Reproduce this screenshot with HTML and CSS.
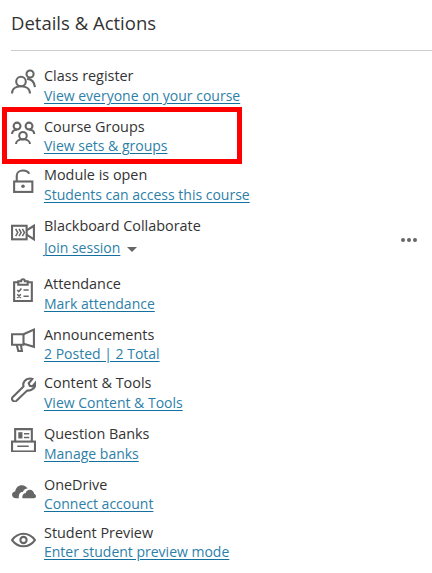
FILE: index.html
```html
<!DOCTYPE html>
<html lang="en">
<head>
  <meta charset="UTF-8" />
  <meta name="viewport" content="width=device-width, initial-scale=1.0" />
  <title>Details &amp; Actions</title>
  <link rel="stylesheet" href="styles.css">
</head>
<body>
  <div class="panel">
    <h2 class="panel-title">Details &amp; Actions</h2>

    <ul class="actions">
      <li class="action">
        <svg class="icon" viewBox="0 0 24 24"><circle cx="9.600" cy="12" r="4.600"/><circle cx="18.300" cy="4.800" r="3.400"/><path d="M1 23.500c0-4.500 3.800-7 8.600-7s8.600 2.500 8.600 7"/><path d="M15.500 9.500c4.300.3 7 3.500 7.500 8"/></svg>
        <div class="action-text">
          <div class="action-name">Class register</div>
          <a class="action-link" href="#">View everyone on your course</a>
        </div>
      </li>

      <li class="action action-short action-tight">
        <svg class="icon" viewBox="0 0 24 24"><circle cx="5.800" cy="6.800" r="3.300"/><circle cx="17.300" cy="6.800" r="3.300"/><circle cx="11.500" cy="16" r="3.600"/><path d="M1 14.500c0-2.500 2-4.300 4.800-4.300"/><path d="M22.300 14.500c0-2.500-2-4.300-4.800-4.300"/><path d="M4.800 24c0-2.800 3-4.500 6.700-4.500s6.700 1.700 6.700 4.500"/></svg>
        <div class="action-text">
          <div class="action-name">Course Groups</div>
          <a class="action-link" href="#">View sets &amp; groups</a>
        </div>
      </li>

      <li class="action action-low">
        <svg class="icon" viewBox="0 0 24 24"><path d="M5.500 12V6.500C5.500 3.500 8 1.500 11.500 1.500c2.800 0 5 1 6 3"/><rect x="3" y="12" width="17.500" height="10"/><circle class="solid" cx="11.500" cy="16.500" r="1.700"/></svg>
        <div class="action-text">
          <div class="action-name">Module is open</div>
          <a class="action-link" href="#">Students can access this course</a>
        </div>
      </li>

      <li class="action action-tall">
        <svg class="icon" viewBox="0 0 24 24"><rect x="1" y="6.500" width="14" height="13"/><path d="M15 11l7-4.500v13L15 15"/><path class="thin" d="M4.500 9.500l2 3.500-2 3.500M7.700 9.500l2 3.500-2 3.500M10.900 9.500l2 3.500-2 3.500"/></svg>
        <div class="action-text">
          <div class="action-name">Blackboard Collaborate</div>
          <div class="session-row">
            <a class="action-link" href="#">Join session</a>
            <span class="caret"></span>
          </div>
        </div>
        <div class="more"><span></span><span></span><span></span></div>
      </li>

      <li class="action">
        <svg class="icon" viewBox="0 0 24 24"><path d="M7 5H3v18h17V5h-4"/><path d="M7 7.500V4h2.700a1.800 1.800 0 0 1 3.600 0H16v3.500z"/><path class="thin" d="M6 12.500l1.500 1.500 2.500-3M12 12.500h5M6 16.500l3.500 3.500M9.500 16.500L6 20M12 18.500h5"/></svg>
        <div class="action-text">
          <div class="action-name">Attendance</div>
          <a class="action-link" href="#">Mark attendance</a>
        </div>
      </li>

      <li class="action action-short action-tight">
        <svg class="icon" viewBox="0 0 24 24"><path d="M1 7h11v10H1z"/><path d="M12 7l10-4.500v16.500l-10-3"/><path d="M5.500 17l1.500 6h3.500l-1-6"/></svg>
        <div class="action-text">
          <div class="action-name">Announcements</div>
          <a class="action-link" href="#">2 Posted | 2 Total</a>
        </div>
      </li>

      <li class="action action-low">
        <svg class="icon" viewBox="0 0 24 24"><path d="M1.500 19.500L12 9c-1-3.500 1.500-7.500 6.500-7.500.8 0 1.500.2 2 .4L17 6l1 2.500 2.500.5 3-3.500c.4 4.500-3 8-8 7.500L5 23c-1 .8-2 .8-2.800 0l-.7-.7c-.8-.8-.8-2 0-2.800z"/></svg>
        <div class="action-text">
          <div class="action-name">Content &amp; Tools</div>
          <a class="action-link" href="#">View Content &amp; Tools</a>
        </div>
      </li>

      <li class="action">
        <svg class="icon" viewBox="0 0 24 24"><path d="M4 14V2h16v12"/><rect x="1" y="14" width="22" height="9.500"/><path class="thin" d="M6 18.500h11M12.500 6.500h5M12.500 10h5"/><rect class="solid" x="7" y="5" width="4" height="6"/></svg>
        <div class="action-text">
          <div class="action-name">Question Banks</div>
          <a class="action-link" href="#">Manage banks</a>
        </div>
      </li>

      <li class="action action-short action-tight">
        <svg class="icon" viewBox="0 0 24 24"><path class="solid" transform="translate(0 .8)" d="M5 19.500c-2.500 0-4-1.500-4-3.300 0-1.800 1.300-3 3-3.200.5-3.500 3-6 6.500-6 2.400 0 4.300 1.200 5.500 3.200-2.300.2-4 1.500-4.700 3.300-2.500 0-4 1.800-3.800 6zM11 19.500c-.6-2.800 1-4.800 3-4.800.5-2 2.200-3.200 4-3.200 2.300 0 4 1.700 4.200 3.800 1 .4 1.800 1.300 1.800 2.300 0 1-.8 1.900-2 1.900z"/></svg>
        <div class="action-text">
          <div class="action-name">OneDrive</div>
          <a class="action-link" href="#">Connect account</a>
        </div>
      </li>

      <li class="action action-low action-tight">
        <svg class="icon" viewBox="0 0 24 24"><path d="M1 12.500c3-4 7-6 11-6s8 2 11 6c-3 4-7 6-11 6s-8-2-11-6z"/><circle cx="12" cy="12.500" r="3"/></svg>
        <div class="action-text">
          <div class="action-name">Student Preview</div>
          <a class="action-link" href="#">Enter student preview mode</a>
        </div>
      </li>
    </ul>
  </div>

  <div class="highlight"></div>
</body>
</html>
```

FILE: styles.css
```css
body {
  margin: 0;
  font-family: "Open Sans", Arial, sans-serif;
  background: white;
  color: #333;
  overflow: hidden;
}
.panel {
  padding: 10px 0 0 11px;
}
.panel-title {
  margin: 0;
  height: 40px;
  font-size: 18.500px;
  line-height: 26px;
  font-weight: 400;
  color: #333;
  border-bottom: 1px solid #cdcdcd;
}
.actions {
  list-style: none;
  margin: 0;
  padding: 15px 0 0;
}
.action {
  display: flex;
  align-items: flex-start;
  height: 51px;
  position: relative;
}
.action-short {
  height: 48px;
}
.action-tall {
  height: 58px;
}
.icon {
  flex: none;
  width: 25px;
  height: 25px;
  margin: 3px 8px 0 0;
  fill: none;
  stroke: #666;
  stroke-width: 2;
}
.action-short .icon {
  margin-top: 2px;
}
.action-low .icon {
  margin-top: 4px;
}
.icon .thin {
  stroke-width: 1.500;
}
.icon .solid {
  fill: #666;
  stroke: none;
}
.action-text {
  flex: 1;
  font-size: 14px;
  line-height: 20px;
}
.action-tight .action-text {
  line-height: 19px;
}
.action-name {
  color: #333;
  font-size: 14.400px;
}
.action-link {
  color: #2e7fa8;
  text-decoration-color: #14719f;
  text-underline-offset: 2px;
}
.session-row {
  display: flex;
  align-items: center;
  gap: 7px;
  margin-top: 2px;
}
.caret {
  margin-top: 2px;
  border-left: 5px solid transparent;
  border-right: 5px solid transparent;
  border-top: 5px solid #666;
}
.more {
  display: flex;
  gap: 2px;
  align-self: center;
  margin: 0 15px 10px 0;
}
.more span {
  width: 4px;
  height: 4px;
  border-radius: 50%;
  background: #666;
}
.highlight {
  position: absolute;
  left: 2px;
  top: 107px;
  width: 240px;
  height: 57px;
  box-sizing: border-box;
  border: 5px solid #f00;
}
```
